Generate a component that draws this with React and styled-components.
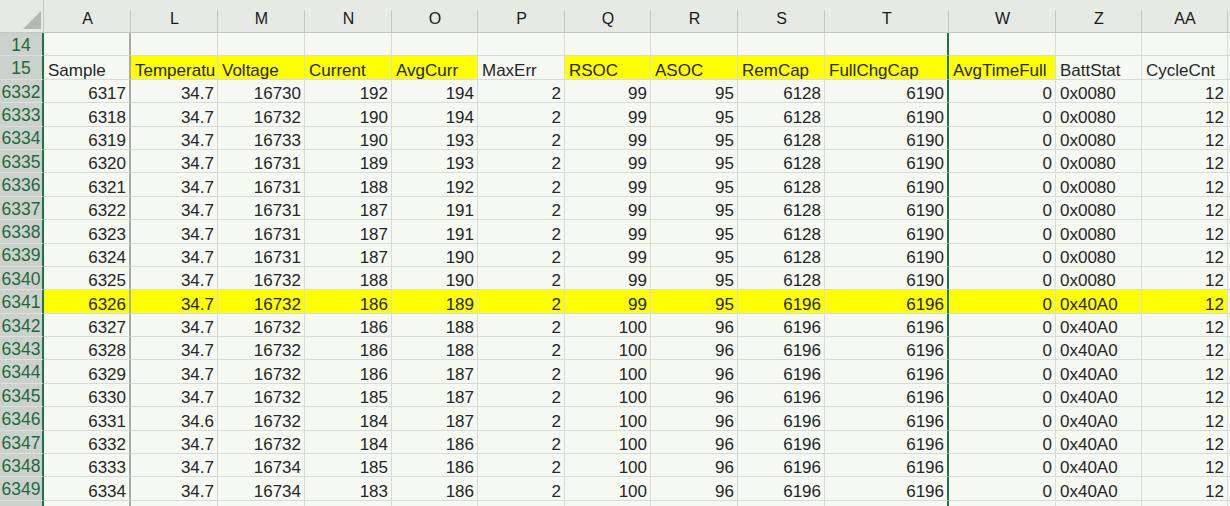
import React from 'react';
import styled, { createGlobalStyle } from 'styled-components';

const GlobalStyle = createGlobalStyle`
    html, body {
        margin: 0;
        padding: 0;
        background: #f5f9f2;
    }
`;

const COLUMNS = [
    { key: 'A', width: 87, title: 'Sample' },
    { key: 'L', width: 87, title: 'Temperatu', fill: true },
    { key: 'M', width: 87, title: 'Voltage', fill: true },
    { key: 'N', width: 87, title: 'Current', fill: true },
    { key: 'O', width: 86, title: 'AvgCurr', fill: true },
    { key: 'P', width: 87, title: 'MaxErr' },
    { key: 'Q', width: 86, title: 'RSOC', fill: true },
    { key: 'R', width: 87, title: 'ASOC', fill: true },
    { key: 'S', width: 87, title: 'RemCap', fill: true },
    { key: 'T', width: 124, title: 'FullChgCap', fill: true },
    { key: 'W', width: 107, title: 'AvgTimeFull', fill: true },
    { key: 'Z', width: 86, title: 'BattStat', text: true },
    { key: 'AA', width: 86, title: 'CycleCnt' },
    { key: 'AB', width: 0, title: '' },
];

// sample, temp, voltage, current, avgcurr
const SERIES = [
    [6317, '34.7', 16730, 192, 194],
    [6318, '34.7', 16732, 190, 194],
    [6319, '34.7', 16733, 190, 193],
    [6320, '34.7', 16731, 189, 193],
    [6321, '34.7', 16731, 188, 192],
    [6322, '34.7', 16731, 187, 191],
    [6323, '34.7', 16731, 187, 191],
    [6324, '34.7', 16731, 187, 190],
    [6325, '34.7', 16732, 188, 190],
    [6326, '34.7', 16732, 186, 189],
    [6327, '34.7', 16732, 186, 188],
    [6328, '34.7', 16732, 186, 188],
    [6329, '34.7', 16732, 186, 187],
    [6330, '34.7', 16732, 185, 187],
    [6331, '34.6', 16732, 184, 187],
    [6332, '34.7', 16732, 184, 186],
    [6333, '34.7', 16734, 185, 186],
    [6334, '34.7', 16734, 183, 186],
];

const ROWS = SERIES.map((s, i) => {
    const after = i >= 9;
    const full = i >= 10;
    return {
        num: 6332 + i,
        marked: i === 9,
        values: [
            ...s,
            2,
            full ? 100 : 99,
            full ? 96 : 95,
            after ? 6196 : 6128,
            after ? 6196 : 6190,
            0,
            after ? '0x40A0' : '0x0080',
            12,
            '',
        ],
    };
});

const Sheet = styled.div`
    display: grid;
    grid-template-columns: 44px ${COLUMNS.slice(0, -1).map(c => c.width + 'px').join(' ')} 1fr;
    grid-template-rows: 33px repeat(21, 23.4px);
    height: 506px;
    overflow: hidden;
    font-family: "Liberation Sans", Arial, sans-serif;
    background: #f5f9f2;
`;

const Corner = styled.div`
    display: flex;
    align-items: flex-end;
    justify-content: flex-end;
    padding: 0 2px 3px 0;
    background: #e6e9e4;
    border-bottom: 1px solid #c4c7c2;
    border-right: 1px solid #c4c7c2;
    box-sizing: border-box;
`;

const ColHead = styled.div`
    display: flex;
    align-items: flex-end;
    justify-content: center;
    padding-bottom: 4px;
    box-sizing: border-box;
    font-size: 16px;
    color: #1a1a1a;
    background:
        linear-gradient(#c4c7c2, #c4c7c2) right bottom / 1px calc(100% - 10px) no-repeat,
        #e6e9e4;
    border-bottom: 1px solid #c4c7c2;
    overflow: hidden;
`;

const RowHead = styled.div`
    display: flex;
    align-items: flex-end;
    justify-content: center;
    box-sizing: border-box;
    font-size: 17.5px;
    line-height: 1;
    color: #1d6a3f;
    background: #cdd1cc;
    border-right: 2px solid #237245;
    border-bottom: 1px solid #dde0db;
    padding-bottom: 1px;
`;

const Cell = styled.div`
    display: flex;
    align-items: flex-end;
    justify-content: ${p => (p.$left ? 'flex-start' : 'flex-end')};
    box-sizing: border-box;
    padding: 0 3px 0 4px;
    font-size: 17px;
    line-height: 1;
    color: #262626;
    white-space: nowrap;
    overflow-x: clip;
    background: ${p => (p.$fill ? '#ffff00' : '#f5f9f2')};
    border-bottom: 1px solid #d9dcd6;
    border-right: ${p =>
        p.$edge === 'hidden' ? '2px solid #a9ada7' :
        p.$edge === 'green' ? '2px solid #237245' :
        '1px solid #d9dcd6'};
`;

const edgeOf = key => (key === 'A' ? 'hidden' : key === 'T' ? 'green' : null);

const CornerMark = () => (
    <svg width="18" height="18" viewBox="0 0 18 18">
        <polygon points="18,0 18,18 0,18" fill="#b4b8b2" />
    </svg>
);

const App = () => {
    return (
        <Sheet>
            <GlobalStyle />
            <Corner><CornerMark /></Corner>
            {COLUMNS.map(c => (
                <ColHead key={c.key}>{c.key === 'AB' ? '' : c.key}</ColHead>
            ))}

            <RowHead>14</RowHead>
            {COLUMNS.map(c => (
                <Cell key={c.key} $edge={edgeOf(c.key)} />
            ))}

            <RowHead>15</RowHead>
            {COLUMNS.map(c => (
                <Cell key={c.key} $left $fill={c.fill} $edge={edgeOf(c.key)}>{c.title}</Cell>
            ))}

            {ROWS.map(r => (
                <React.Fragment key={r.num}>
                    <RowHead>{r.num}</RowHead>
                    {COLUMNS.map((c, i) => (
                        <Cell
                            key={c.key}
                            $left={c.text}
                            $fill={r.marked && c.key !== 'AB'}
                            $edge={edgeOf(c.key)}
                        >
                            {r.values[i]}
                        </Cell>
                    ))}
                </React.Fragment>
            ))}

            {/* next row, only its top edge is in view */}
            <RowHead />
            {COLUMNS.map(c => (
                <Cell key={c.key} $edge={edgeOf(c.key)} />
            ))}
        </Sheet>
    );
};

export default App;
